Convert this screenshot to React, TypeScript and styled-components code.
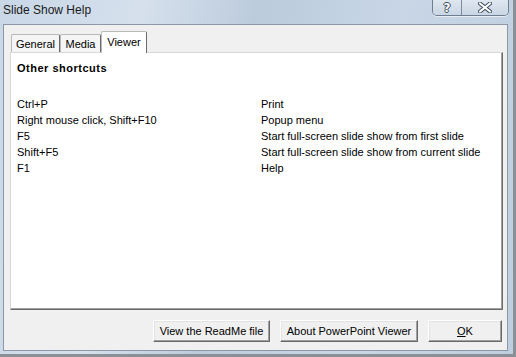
import styled, { createGlobalStyle } from 'styled-components';

const GlobalStyle = createGlobalStyle`
  html, body {
    margin: 0;
    padding: 0;
    background: #6f7378;
  }
  body {
    font-family: 'Liberation Sans', Arial, sans-serif;
    font-size: 11px;
    color: #000;
  }
`;

const shortcuts = [
  { keys: 'Ctrl+P', action: 'Print' },
  { keys: 'Right mouse click, Shift+F10', action: 'Popup menu' },
  { keys: 'F5', action: 'Start full-screen slide show from first slide' },
  { keys: 'Shift+F5', action: 'Start full-screen slide show from current slide' },
  { keys: 'F1', action: 'Help' },
];

export default function App() {
  return (
    <>
      <GlobalStyle />
      <Window>
        <TitleBar>
          <Title>Slide Show Help</Title>
          <CaptionButtons>
            <CaptionButton $width={28}>
              <HelpGlyph>?</HelpGlyph>
            </CaptionButton>
            <CaptionButton $width={46}>
              <svg width="14" height="11" viewBox="0 0 14 11">
                <path d="M2 1.5 L12 9.5 M12 1.5 L2 9.5" stroke="#3c4a5c" strokeWidth="4" strokeLinecap="square" />
                <path d="M2 1.5 L12 9.5 M12 1.5 L2 9.5" stroke="#fff" strokeWidth="2" strokeLinecap="square" />
              </svg>
            </CaptionButton>
          </CaptionButtons>
        </TitleBar>
        <Client>
          <TabStrip>
            <Tab $width={49}>General</Tab>
            <Tab $width={41}>Media</Tab>
            <Tab $width={46} $active>
              Viewer
            </Tab>
          </TabStrip>
          <Panel>
            <Heading>Other shortcuts</Heading>
            <ShortcutGrid>
              {shortcuts.map((s) => (
                <Row key={s.keys}>
                  <span>{s.keys}</span>
                  <span>{s.action}</span>
                </Row>
              ))}
            </ShortcutGrid>
          </Panel>
          <ButtonRow>
            <Button $width={117}>View the ReadMe file</Button>
            <Button $width={138}>About PowerPoint Viewer</Button>
            <Button $width={74}>
              <u>O</u>K
            </Button>
          </ButtonRow>
        </Client>
      </Window>
    </>
  );
}

const Window = styled.div`
  width: 516px;
  height: 357px;
  box-sizing: border-box;
  display: flex;
  flex-direction: column;
  background: linear-gradient(100deg, #c9d7e7 0%, #d5e0ec 25%, #bccbdc 45%, #c8d6e6 70%, #bfcede 100%);
  box-shadow: inset -3px -3px 0 #8a9096;
`;

const TitleBar = styled.div`
  height: 24px;
  display: flex;
  align-items: flex-start;
  padding-left: 3px;
  flex-shrink: 0;
`;

const Title = styled.div`
  font-size: 12px;
  line-height: 20px;
  color: #1a1a1a;
`;

const CaptionButtons = styled.div`
  margin-left: auto;
  margin-right: 7px;
  display: flex;
  height: 15px;
  border: 1px solid #6e7d90;
  border-top: none;
  border-radius: 0 0 5px 5px;
  overflow: hidden;
  box-shadow: 0 1px 0 rgba(255, 255, 255, 0.6);
`;

const CaptionButton = styled.div<{ $width: number }>`
  width: ${(p) => p.$width}px;
  display: flex;
  align-items: center;
  justify-content: center;
  background: linear-gradient(#dfe7f0, #c9d6e4);
  & + & {
    border-left: 1px solid #7d8b9c;
  }
`;

const HelpGlyph = styled.span`
  font-family: 'DejaVu Sans', sans-serif;
  font-weight: bold;
  font-size: 12px;
  line-height: 12px;
  color: #fff;
  text-shadow: 1px 0 0 #3c4a5c, -1px 0 0 #3c4a5c, 0 1px 0 #3c4a5c, 0 -1px 0 #3c4a5c;
`;

const Client = styled.div`
  flex: 1;
  margin: 0 8px 6px 3px;
  background: #f0f0f0;
  border: 1px solid #8d98a6;
  display: flex;
  flex-direction: column;
`;

const TabStrip = styled.div`
  display: flex;
  align-items: flex-end;
  padding: 6px 0 0 7px;
  height: 21px;
  position: relative;
  z-index: 1;
`;

const Tab = styled.div<{ $width: number; $active?: boolean }>`
  box-sizing: border-box;
  width: ${(p) => p.$width}px;
  height: ${(p) => (p.$active ? 22 : 18)}px;
  margin-bottom: ${(p) => (p.$active ? -1 : 0)}px;
  padding-top: ${(p) => (p.$active ? 3 : 2)}px;
  text-align: center;
  line-height: 14px;
  background: ${(p) => (p.$active ? '#fff' : '#f5f5f5')};
  border: 1px solid #b9b9b9;
  border-bottom: none;
  border-right-color: #6a6a6a;
  border-radius: 2px 2px 0 0;
`;

const Panel = styled.div`
  height: 258px;
  box-sizing: border-box;
  margin: 0 4px 0 6px;
  padding: 7px 6px;
  background: #fff;
  border: 1px solid #d8d8d8;
  border-right-color: #6a6a6a;
  border-bottom-color: #6a6a6a;
  box-shadow: inset -1px -1px 0 #a0a0a0;
`;

const Heading = styled.div`
  font-weight: bold;
  letter-spacing: 0.5px;
  line-height: 16px;
`;

const ShortcutGrid = styled.div`
  margin-top: 20px;
  display: flex;
  flex-direction: column;
`;

const Row = styled.div`
  display: grid;
  grid-template-columns: 244px auto;
  line-height: 16px;
`;

const ButtonRow = styled.div`
  display: flex;
  justify-content: flex-end;
  gap: 10px;
  margin-top: 10px;
  padding-right: 5px;
`;

const Button = styled.button<{ $width: number }>`
  box-sizing: border-box;
  width: ${(p) => p.$width}px;
  height: 22px;
  padding: 0;
  font-family: 'Liberation Sans', Arial, sans-serif;
  font-size: 11px;
  color: #000;
  background: #f0f0f0;
  border: 1px solid;
  border-color: #fff #696969 #696969 #fff;
  box-shadow: inset -1px -1px 0 #a0a0a0, inset 1px 1px 0 #e3e3e3;
  border-radius: 0;
  cursor: pointer;
`;
